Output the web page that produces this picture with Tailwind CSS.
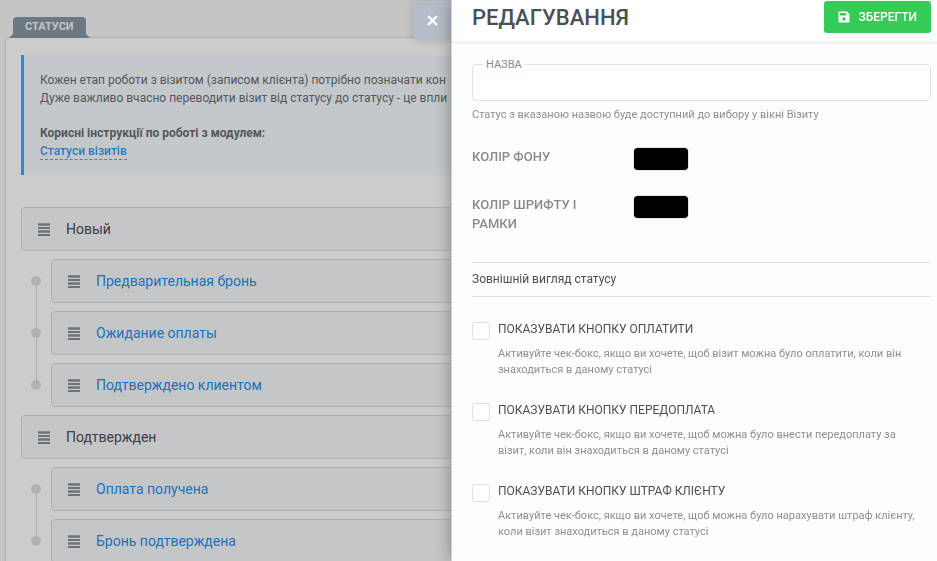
<!DOCTYPE html>
<html lang="uk">
<head>
    <meta charset="UTF-8">
    <meta name="viewport" content="width=device-width, initial-scale=1.0">
    <title>Статуси</title>
    <script src="https://cdn.jsdelivr.net/npm/@tailwindcss/browser@4"></script>
</head>
<body class="h-screen overflow-hidden bg-[#f7f7f7] font-[Roboto,sans-serif] text-[#6a6e73]">
    <svg class="hidden" xmlns="http://www.w3.org/2000/svg">
        <symbol id="icon-bars" viewBox="0 0 12 13">
            <path d="M0 .3h12v2.400H0zM0 4h12v2H0zM0 7.300h12v2.400H0zM0 11h12v2H0z"/>
        </symbol>
    </svg>

    <!-- Statuses page -->
    <main class="pl-[6px] pt-[17px]">
        <div class="flex px-[7px]">
            <h1 class="relative flex h-[21px] items-center rounded-t bg-[#8798a7] px-3 text-[11px] font-bold text-[#f5f5f5] before:absolute before:right-full before:bottom-0 before:border-b-4 before:border-l-4 before:border-b-[#8798a7] before:border-l-transparent after:absolute after:bottom-0 after:left-full after:border-r-4 after:border-b-4 after:border-r-transparent after:border-b-[#8798a7]">СТАТУСИ</h1>
        </div>
        <section class="min-h-screen rounded-tl bg-white pr-4 pl-[15px] pt-[17px] shadow-[0_0_3px_rgba(0,0,0,0.25)]">
            <div class="h-[120px] overflow-hidden border-l-3 border-[#4ba6f3] bg-[#f5fafe] px-4 pt-4 text-[12px] leading-[18px] whitespace-nowrap">
                <p>Кожен етап роботи з візитом (записом клієнта) потрібно позначати кон</p>
                <p>Дуже важливо вчасно переводити візит від статусу до статусу - це впли</p>
                <p class="mt-[17px] font-bold">Корисні інструкції по роботі з модулем:</p>
                <a href="#" class="inline-block border-b border-dashed border-[#4ba6f3] leading-4 font-medium text-[#3e9aee]">Статуси візитів</a>
            </div>

            <ul class="mt-8 flex flex-col gap-2 text-[14px] text-[#4a4e54]">
                <li class="flex flex-col gap-2">
                    <div class="flex h-11 items-center gap-4 rounded border border-[#d8dde3] bg-[#f7f8fa] px-4">
                        <svg class="h-[13px] w-3 fill-[#8a9099]"><use href="#icon-bars"/></svg>
                        <span>Новый</span>
                    </div>
                    <ul class="relative flex flex-col gap-2 text-[#1f8ff0] before:absolute before:inset-y-[22px] before:left-[15px] before:w-px before:bg-[#dcdcdc]">
                        <li class="flex items-center gap-[10px] pl-[10px]">
                            <span class="size-[10px] rounded-full bg-[#dfdfdf]"></span>
                            <div class="flex h-11 flex-1 items-center gap-4 rounded border border-[#d8dde3] bg-[#f7f8fa] px-4">
                                <svg class="h-[13px] w-3 fill-[#8a9099]"><use href="#icon-bars"/></svg>
                                <a href="#">Предварительная бронь</a>
                            </div>
                        </li>
                        <li class="flex items-center gap-[10px] pl-[10px]">
                            <span class="size-[10px] rounded-full bg-[#dfdfdf]"></span>
                            <div class="flex h-11 flex-1 items-center gap-4 rounded border border-[#d8dde3] bg-[#f7f8fa] px-4">
                                <svg class="h-[13px] w-3 fill-[#8a9099]"><use href="#icon-bars"/></svg>
                                <a href="#">Ожидание оплаты</a>
                            </div>
                        </li>
                        <li class="flex items-center gap-[10px] pl-[10px]">
                            <span class="size-[10px] rounded-full bg-[#dfdfdf]"></span>
                            <div class="flex h-11 flex-1 items-center gap-4 rounded border border-[#d8dde3] bg-[#f7f8fa] px-4">
                                <svg class="h-[13px] w-3 fill-[#8a9099]"><use href="#icon-bars"/></svg>
                                <a href="#">Подтверждено клиентом</a>
                            </div>
                        </li>
                    </ul>
                </li>
                <li class="flex flex-col gap-2">
                    <div class="flex h-11 items-center gap-4 rounded border border-[#d8dde3] bg-[#f7f8fa] px-4">
                        <svg class="h-[13px] w-3 fill-[#8a9099]"><use href="#icon-bars"/></svg>
                        <span>Подтвержден</span>
                    </div>
                    <ul class="relative flex flex-col gap-2 text-[#1f8ff0] before:absolute before:inset-y-[22px] before:left-[15px] before:w-px before:bg-[#dcdcdc]">
                        <li class="flex items-center gap-[10px] pl-[10px]">
                            <span class="size-[10px] rounded-full bg-[#dfdfdf]"></span>
                            <div class="flex h-11 flex-1 items-center gap-4 rounded border border-[#d8dde3] bg-[#f7f8fa] px-4">
                                <svg class="h-[13px] w-3 fill-[#8a9099]"><use href="#icon-bars"/></svg>
                                <a href="#">Оплата получена</a>
                            </div>
                        </li>
                        <li class="flex items-center gap-[10px] pl-[10px]">
                            <span class="size-[10px] rounded-full bg-[#dfdfdf]"></span>
                            <div class="flex h-11 flex-1 items-center gap-4 rounded border border-[#d8dde3] bg-[#f7f8fa] px-4">
                                <svg class="h-[13px] w-3 fill-[#8a9099]"><use href="#icon-bars"/></svg>
                                <a href="#">Бронь подтверждена</a>
                            </div>
                        </li>
                    </ul>
                </li>
            </ul>
        </section>
    </main>

    <!-- Edit drawer -->
    <div class="fixed inset-0 flex items-start justify-end bg-black/20">
        <button type="button" aria-label="Закрити" class="mt-px flex h-[39px] w-[38px] items-center justify-center rounded-l bg-[#b5bec8] shadow-[0_0_8px_rgba(0,0,0,0.2)]">
            <svg class="size-[11px] stroke-white" viewBox="0 0 11 11" fill="none" stroke-width="2.4"><path d="M1 1l9 9M10 1l-9 9"/></svg>
        </button>
        <aside class="h-full w-[486px] overflow-hidden border-l border-[#d0d0d0] bg-[#fdfdfd] shadow-[0_0_16px_rgba(0,0,0,0.35)]">
            <header class="flex h-11 items-start justify-between border-b-3 border-[#f3f3f3] bg-white pt-px pr-[6px] pl-5">
                <h2 class="text-[22px] leading-[34px] font-medium text-[#4a4f58]">РЕДАГУВАННЯ</h2>
                <button type="submit" form="status-form" class="flex h-8 items-center gap-2 rounded-[3px] bg-[#34cb56] px-[14px] text-[12px] font-medium text-white">
                    <svg class="size-3 fill-white" viewBox="0 0 12 12"><path fill-rule="evenodd" d="M1.500 .5H9L11.500 3v7.500a1 1 0 0 1-1 1h-9a1 1 0 0 1-1-1v-9a1 1 0 0 1 1-1zM2 2v2.500h6V2zM6 6.300a1.700 1.700 0 1 0 0 3.400a1.700 1.700 0 0 0 0-3.400z"/></svg>
                    ЗБЕРЕГТИ
                </button>
            </header>
            <form id="status-form" class="pt-5 pr-[6px] pl-5">
                <div class="relative">
                    <label for="name" class="absolute -top-2 left-[11px] bg-[#fdfdfd] px-[3px] text-[11px] leading-[18px] text-[#868b92]">НАЗВА</label>
                    <input id="name" type="text" class="block h-[37px] w-full rounded border border-[#e2e2e2] bg-white px-3 text-[12px]">
                </div>
                <p class="mt-[6px] text-[11px] leading-4 text-[#8f8f8f]">Статус з вказаною назвою буде доступний до вибору у вікні Візиту</p>

                <div class="mt-6 flex items-start text-[13px] leading-[19px] font-medium text-[#868b92]">
                    <label for="background" class="w-[161px] pr-10">КОЛІР ФОНУ</label>
                    <input id="background" type="color" value="#000000" class="h-6 w-14 overflow-hidden rounded border border-[#e5e5e5] p-0 [&::-webkit-color-swatch]:rounded-[3px] [&::-webkit-color-swatch]:border-0 [&::-webkit-color-swatch-wrapper]:p-0">
                </div>
                <div class="mt-6 flex items-start text-[13px] leading-[19px] font-medium text-[#868b92]">
                    <label for="foreground" class="w-[161px] pr-10">КОЛІР ШРИФТУ І РАМКИ</label>
                    <input id="foreground" type="color" value="#000000" class="h-6 w-14 overflow-hidden rounded border border-[#e5e5e5] p-0 [&::-webkit-color-swatch]:rounded-[3px] [&::-webkit-color-swatch]:border-0 [&::-webkit-color-swatch-wrapper]:p-0">
                </div>

                <h3 class="mt-[29px] border-y border-[#dee1e8] py-2 text-[12px] leading-[17px] text-[#4a4f58]">Зовнішній вигляд статусу</h3>

                <div class="mt-6 flex flex-col gap-6">
                    <div class="flex items-start gap-2">
                        <input id="pay" type="checkbox" class="mt-px size-[18px] shrink-0 appearance-none rounded-[2px] border border-[#e2e2e2] bg-white">
                        <div class="pr-2">
                            <label for="pay" class="block text-[12px] leading-[17px] text-[#4a4f58]">ПОКАЗУВАТИ КНОПКУ ОПЛАТИТИ</label>
                            <p class="mt-2 text-[11px] leading-4 text-[#8f8f8f]">Активуйте чек-бокс, якщо ви хочете, щоб візит можна було оплатити, коли він знаходиться в даному статусі</p>
                        </div>
                    </div>
                    <div class="flex items-start gap-2">
                        <input id="prepay" type="checkbox" class="mt-px size-[18px] shrink-0 appearance-none rounded-[2px] border border-[#e2e2e2] bg-white">
                        <div class="pr-2">
                            <label for="prepay" class="block text-[12px] leading-[17px] text-[#4a4f58]">ПОКАЗУВАТИ КНОПКУ ПЕРЕДОПЛАТА</label>
                            <p class="mt-2 text-[11px] leading-4 text-[#8f8f8f]">Активуйте чек-бокс, якщо ви хочете, щоб можна було внести передоплату за візит, коли він знаходиться в даному статусі</p>
                        </div>
                    </div>
                    <div class="flex items-start gap-2">
                        <input id="penalty" type="checkbox" class="mt-px size-[18px] shrink-0 appearance-none rounded-[2px] border border-[#e2e2e2] bg-white">
                        <div class="pr-2">
                            <label for="penalty" class="block text-[12px] leading-[17px] text-[#4a4f58]">ПОКАЗУВАТИ КНОПКУ ШТРАФ КЛІЄНТУ</label>
                            <p class="mt-2 text-[11px] leading-4 text-[#8f8f8f]">Активуйте чек-бокс, якщо ви хочете, щоб можна було нарахувати штраф клієнту, коли візит знаходиться в даному статусі</p>
                        </div>
                    </div>
                </div>
            </form>
        </aside>
    </div>
</body>
</html>
